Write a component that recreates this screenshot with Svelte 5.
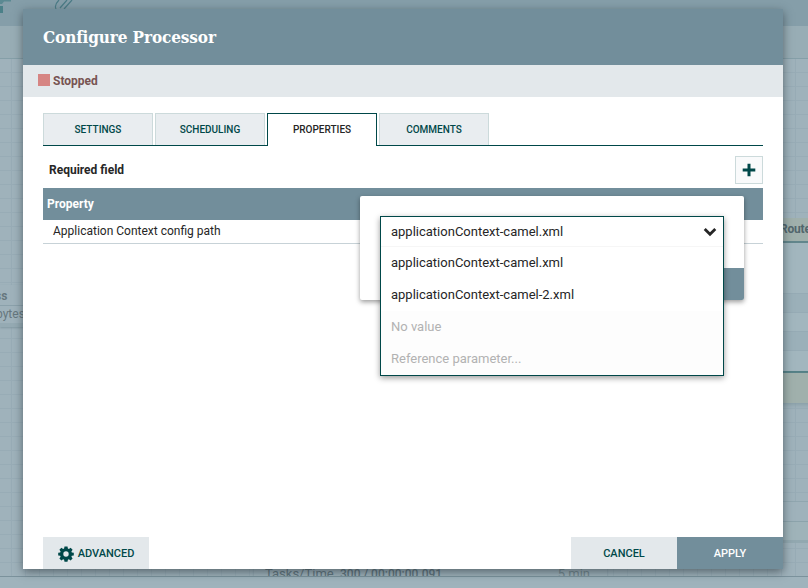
<script>
  const tabs = ['SETTINGS', 'SCHEDULING', 'PROPERTIES', 'COMMENTS'];
  const active = 'PROPERTIES';
  const options = [
    { label: 'applicationContext-camel.xml' },
    { label: 'applicationContext-camel-2.xml' },
    { label: 'No value', unset: true },
    { label: 'Reference parameter...', unset: true }
  ];
</script>

<div class="page">
  <div class="toolbar">
    <svg width="90" height="14" viewBox="0 0 90 14">
      <path d="M0 0h11v1.500H4L2 4H0z" fill="#5b8992" />
      <path d="M0 6h3v7H0z" fill="#4b8088" />
      <path d="M56 9C54.500 6 57 2 59 0M60 8L67 0M64 9L72 0" fill="none" stroke="#4b7b86" stroke-width="1.200" />
    </svg>
  </div>
  <div class="crumbs"></div>
  <div class="canvas"></div>

  <div class="node left">
    <div class="node-name">ss</div>
    <div class="node-size">bytes</div>
    <div class="node-foot"></div>
  </div>
  <div class="node right">
    <div class="route">Route</div>
    <i></i><i class="alt"></i><i></i><i class="alt"></i><i></i>
    <div class="port"></div>
  </div>
  <div class="node corner"><div></div></div>
  <div class="node stats">
    <span class="k">Tasks/Time</span><b>300 / 00:00:00.091</b><span class="min">5 min</span>
  </div>
  <div class="footer"></div>

  <div class="dialog">
    <header><h1>Configure Processor</h1></header>
    <div class="status"><i></i>Stopped</div>
    <main>
      <nav>
        {#each tabs as tab}
          <div class="tab" class:active={tab === active}>{tab}</div>
        {/each}
      </nav>
      <div class="required">
        <span>Required field</span>
        <button class="add" aria-label="New property">
          <svg width="14" height="14" viewBox="0 0 14 14"><path d="M5.500 0.700h3v4.800H13.300v3H8.500V13.300h-3V8.500H0.700v-3h4.800z" fill="#004849" /></svg>
        </button>
      </div>
      <div class="thead">Property</div>
      <div class="row">Application Context config path</div>
    </main>
    <div class="actions">
      <div class="btn advanced">
        <svg width="16" height="16" viewBox="0 0 16 16">
          <path fill="#004849" fill-rule="evenodd" d="M6.500 0.500h3l.4 2 1 .4 1.700-1.200 2 2-1.200 1.700.4 1 2 .4v2.600l-2 .4-.4 1 1.200 1.700-2 2-1.700-1.200-1 .4-.4 2h-3l-.4-2-1-.4-1.700 1.200-2-2 1.200-1.700-.4-1-2-.4V6.800l2-.4.4-1-1.200-1.700 2-2 1.700 1.200 1-.4zM8 5.300a2.700 2.700 0 1 0 0 5.400a2.700 2.700 0 0 0 0-5.400z" />
        </svg>
        ADVANCED
      </div>
      <div class="gap"></div>
      <div class="btn">CANCEL</div>
      <div class="btn primary">APPLY</div>
    </div>
  </div>

  <div class="editor">
    <div class="editor-foot"></div>
  </div>
  <div class="combo">
    <div class="selected">
      applicationContext-camel.xml
      <svg width="14" height="10" viewBox="0 0 14 10"><path d="M1.700 2L7 7.200L12.300 2" fill="none" stroke="#262626" stroke-width="2.800" /></svg>
    </div>
    {#each options as o}
      <div class="option" class:unset={o.unset}>{o.label}</div>
    {/each}
  </div>
</div>

<style>
  .page {
    position: relative;
    width: 808px;
    height: 588px;
    overflow: hidden;
    display: flex;
    flex-direction: column;
    background: #9fb2bb;
    font-family: Roboto, sans-serif;
    font-size: 13px;
    color: #262626;
  }
  .page * { box-sizing: border-box; }
  .toolbar { height: 26px; background: #859ea9; }
  .toolbar svg { display: block; }
  .crumbs { height: 33px; background: #98adb5; border-bottom: 1px solid #859fa8; }
  .canvas {
    flex: 1;
    background:
      linear-gradient(#98acb6 1px, transparent 1px) 0 13px / 14px 14px,
      linear-gradient(90deg, #98acb6 1px, transparent 1px) 11px 0 / 14px 14px,
      #9fb2bb;
  }
  .footer {
    position: absolute;
    inset: 576px 0 0 0;
    background: #9fb3bc;
    border-top: 1px solid #7b929c;
  }
  .node { position: absolute; background: #9fb2bb; }
  .left {
    left: 0;
    top: 285px;
    width: 30px;
    height: 42px;
    box-shadow: 0 1px 2px #8298a2;
    color: #66777e;
  }
  .node-name {
    height: 21px;
    padding-top: 4px;
    font-weight: 700;
    font-size: 12px;
    line-height: 15px;
    border-bottom: 1px solid #8ba1ab;
    text-indent: -5px;
  }
  .node-size { height: 17px; font-size: 12px; line-height: 17px; text-indent: -4px; }
  .node-foot { height: 4px; background: #95aab3; }
  .right { left: 770px; top: 218px; width: 50px; height: 185px; }
  .route {
    height: 25px;
    padding-left: 10px;
    line-height: 22px;
    background: #a0b0ac;
    border-bottom: 2px solid #62868c;
    color: #52666d;
    font-weight: 700;
    font-size: 12px;
    letter-spacing: -0.2px;
  }
  .right i { display: block; height: 19px; border-bottom: 1px solid #96abb5; background: #a2b6be; }
  .right i:nth-of-type(1) { height: 51px; }
  .right i.alt { background: #9bb0b9; }
  .right i:nth-of-type(5) { height: 22px; border-bottom: 2px solid #527f85; }
  .port { height: 30px; background: #a0b0ac; box-shadow: 0 2px 4px #8a9fa8; }
  .corner { left: 770px; top: 501px; width: 50px; height: 42px; border-top: 1px solid #90a6af; border-bottom: 3px solid #92a8b0; }
  .corner div { margin-top: 19px; height: 19px; border-top: 1px solid #8ca3ab; background: #9fb3b9; }
  .stats {
    left: 254px;
    top: 560px;
    width: 353px;
    height: 20px;
    padding: 6px 17px 0 11px;
    display: flex;
    box-shadow: 0 0 2px #8198a2;
    color: #60747d;
    line-height: 16px;
  }
  .k { width: 75px; }
  .stats b { font-weight: 500; font-size: 12px; }
  .min { margin-left: auto; color: #73888f; }

  .dialog {
    position: absolute;
    left: 23px;
    top: 9px;
    width: 760px;
    height: 560px;
    display: flex;
    flex-direction: column;
    background: #fff;
    box-shadow: 0 3px 9px rgba(38, 50, 56, 0.6);
  }
  header { height: 56px; padding: 1px 0 0 20px; background: #728e9b; }
  h1 {
    margin: 0;
    font: bold 17px/55px 'Roboto Slab', 'DejaVu Serif Condensed', 'DejaVu Serif', serif;
    font-stretch: condensed;
    letter-spacing: -0.12px;
    color: #fff;
    white-space: nowrap;
  }
  .status {
    height: 32px;
    padding-left: 15px;
    display: flex;
    align-items: center;
    background: #e3e8eb;
    color: #775351;
    font-weight: 700;
    font-size: 12px;
  }
  .status i { width: 12px; height: 12px; margin: -2px 3px 0 0; background: #d68583; }
  main { flex: 1; padding: 16px 20px 0; }
  nav { height: 33px; display: flex; gap: 2px; border-bottom: 1px solid #004849; }
  .tab {
    width: 110px;
    height: 32px;
    text-align: center;
    border: 1px solid #ccdadb;
    border-bottom: 0;
    background: #e9edf0;
    color: #004849;
    font-weight: 500;
    font-size: 10px;
    line-height: 32px;
  }
  .tab.active { height: 33px; background: #fff; border-color: #004849; color: #262626; }
  .required {
    height: 42px;
    padding: 10px 0 0 6px;
    display: flex;
    justify-content: space-between;
    font-weight: 700;
    font-size: 12px;
    line-height: 28px;
  }
  .add {
    width: 28px;
    height: 28px;
    padding: 0;
    display: grid;
    place-items: center;
    background: #f9fafb;
    border: 1px solid #ccdadb;
  }
  .thead { height: 32px; padding-left: 4px; background: #728e9b; color: #fff; font-weight: 700; font-size: 12px; line-height: 32px; }
  .row { height: 24px; padding-left: 10px; font-size: 12px; line-height: 22px; border-bottom: 1px solid #c7d2d7; }
  .actions { height: 32px; padding-left: 20px; display: flex; }
  .gap { flex: 1; }
  .btn {
    width: 106px;
    display: flex;
    align-items: center;
    justify-content: center;
    background: #e3e8eb;
    color: #004849;
    font-weight: 500;
    font-size: 11px;
  }
  .btn svg { margin: 2px 4px 0 0; }
  .primary { background: #728e9b; color: #fff; }

  .editor {
    position: absolute;
    left: 360px;
    top: 196px;
    width: 384px;
    height: 104px;
    padding-top: 72px;
    background: #fff;
    border-radius: 2px;
    overflow: hidden;
    box-shadow: 0 2px 5px rgba(0, 0, 0, 0.4);
  }
  .editor-foot { height: 32px; margin-left: 192px; background: #728e9b; }
  .combo {
    position: absolute;
    left: 380px;
    top: 216px;
    width: 344px;
    height: 160px;
    background: #fff;
    border: 1px solid #004849;
    box-shadow: 0 2px 6px rgba(0, 0, 0, 0.4);
  }
  .selected {
    height: 30px;
    padding: 0 6px 0 10px;
    display: flex;
    align-items: center;
    justify-content: space-between;
    border-bottom: 1px solid #f6f6f6;
  }
  .selected svg { margin-top: 1px; }
  .option { height: 32px; padding-left: 10px; line-height: 32px; }
  .option.unset { color: #b2b2b2; background: #fdfdfd; }
</style>
